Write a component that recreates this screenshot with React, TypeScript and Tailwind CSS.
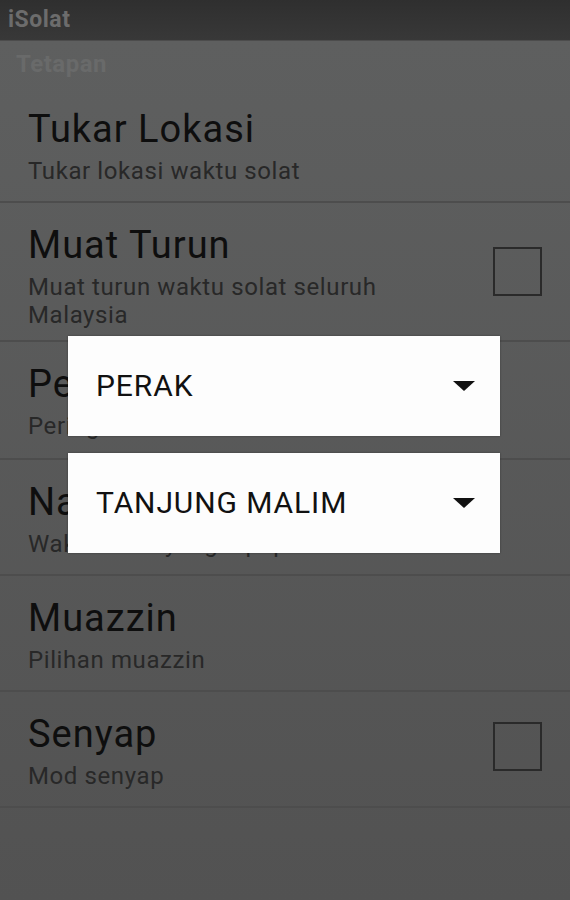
const rows = [
  { title: 'Tukar Lokasi', sub: 'Tukar lokasi waktu solat', check: false, pb: 'pb-[16px]' },
  { title: 'Muat Turun', sub: 'Muat turun waktu solat seluruh Malaysia', check: true, pb: 'pb-[11px]' },
  { title: 'Peringatan', sub: 'Peringatan waktu solat', check: false, pb: 'pb-[18px]' },
  { title: 'Nada Azan', sub: 'Waktu azan yang dipaparkan', check: false, pb: 'pb-[16px]' },
  { title: 'Muazzin', sub: 'Pilihan muazzin', check: false, pb: 'pb-[16px]' },
  { title: 'Senyap', sub: 'Mod senyap', check: true, pb: 'pb-[16px]' },
];

const Caret = () => (
  <svg width="22" height="10" viewBox="0 0 22 10" className="shrink-0">
    <path d="M0 0 H22 L11 10 Z" fill="#111" />
  </svg>
);

const Spinner = ({ label }: { label: string }) => (
  <div className="h-[100px] bg-[#fdfdfd] shadow-[0_0_2px_rgba(0,0,0,0.35)] flex items-center justify-between pl-[28px] pr-[25px]">
    <span className="text-[30px] leading-none text-[#111] tracking-[0.9px]">{label}</span>
    <Caret />
  </div>
);

export default function App() {
  return (
    <div className="relative w-[570px] h-[900px] overflow-hidden font-['Roboto','Liberation_Sans',sans-serif] bg-[#575858]">
      {/* action bar */}
      <div className="h-10 leading-[40px] bg-gradient-to-b from-[#2f2f2f] to-[#383838] pl-2 text-[23px] font-bold text-[#6c6c6c] tracking-[0.5px]">
        iSolat
      </div>
      <div className="h-px bg-[#4c4c4c]" />

      <div className="bg-gradient-to-b from-[#5e5f5f] to-[#525252] h-[859px]">
        <div className="h-[46px] leading-[46px] pl-4 text-[24px] font-bold text-[#696a6a] tracking-[0.5px]">Tetapan</div>

        {rows.map((r) => (
          <div key={r.title} className={`flex items-center gap-7 px-[28px] pt-5 ${r.pb} border-b-2 border-[#4d4d4d]`}>
            <div className="flex-1 min-w-0 pr-2">
              <div className="text-[38px] leading-[44px] text-[#0e0e0e] tracking-[1px]">{r.title}</div>
              <div className="mt-[6px] text-[24px] leading-[28px] text-[#282828] tracking-[0.6px]">{r.sub}</div>
            </div>
            {r.check && <div className="w-[49px] h-[49px] shrink-0 -mt-[10px] border-2 border-[#2a2a2a]" />}
          </div>
        ))}
      </div>

      {/* location picker dialog */}
      <div className="absolute left-[68px] top-[336px] w-[432px] flex flex-col gap-[17px]">
        <Spinner label="PERAK" />
        <Spinner label="TANJUNG MALIM" />
      </div>
    </div>
  );
}
